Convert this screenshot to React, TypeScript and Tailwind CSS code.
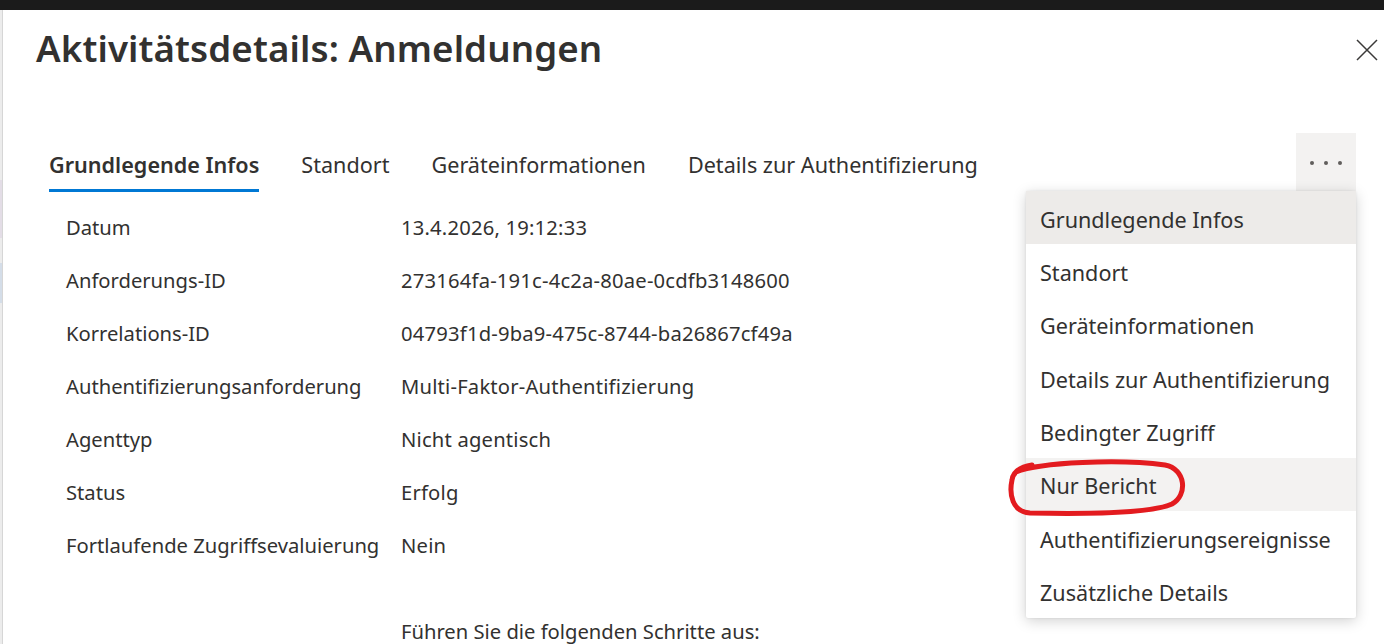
const rows = [
	{ label: 'Datum', value: '13.4.2026, 19:12:33' },
	{ label: 'Anforderungs-ID', value: '273164fa-191c-4c2a-80ae-0cdfb3148600' },
	{ label: 'Korrelations-ID', value: '04793f1d-9ba9-475c-8744-ba26867cf49a' },
	{ label: 'Authentifizierungsanforderung', value: 'Multi-Faktor-Authentifizierung' },
	{ label: 'Agenttyp', value: 'Nicht agentisch' },
	{ label: 'Status', value: 'Erfolg' },
	{ label: 'Fortlaufende Zugriffsevaluierung', value: 'Nein' },
];

const tabs = ['Grundlegende Infos', 'Standort', 'Geräteinformationen', 'Details zur Authentifizierung'];

const menuItems = [
	'Grundlegende Infos',
	'Standort',
	'Geräteinformationen',
	'Details zur Authentifizierung',
	'Bedingter Zugriff',
	'Nur Bericht',
	'Authentifizierungsereignisse',
	'Zusätzliche Details',
];

export default function App() {
	return (
		<div
			className="w-[1384px] h-[644px] overflow-hidden flex flex-col bg-white text-[#323130]"
			style={{ fontFamily: '"Noto Sans", "Open Sans", sans-serif' }}
		>
			{/* top bar of the portal behind */}
			<div className="h-[10px] bg-[#1b1b1b] shrink-0" />

			<div className="flex flex-1 min-h-0">
				{/* sliver of the page behind the panel */}
				<div className="w-[3px] shrink-0 flex flex-col bg-[#ececec] border-r border-[#d6d6d6]">
					<div className="h-[170px]" />
					<div className="h-[58px] bg-[#e3dde6]" />
					<div className="h-[25px]" />
					<div className="h-[40px] bg-[#d4dde8]" />
					<div className="flex-1" />
				</div>

				<div className="flex-1 relative">
					{/* header */}
					<div className="flex items-start justify-between pl-[33px] pr-[6px] pt-[16px]">
						<h1 className="text-[36.7px] font-semibold leading-[44px] tracking-[0.1px]">
							Aktivitätsdetails: Anmeldungen
						</h1>
						<button className="mt-[13px] w-[22px] h-[22px] text-[#3b3a39]">
							<svg width="22" height="22" viewBox="0 0 22 22">
								<path d="M1 1 L21 21 M21 1 L1 21" stroke="currentColor" strokeWidth="1.5" fill="none" />
							</svg>
						</button>
					</div>

					{/* tabs */}
					<div className="flex items-stretch mt-[63px] h-[58px] pl-[46px] pr-[28px]">
						<div className="flex items-stretch gap-[42px] text-[21.6px]">
							{tabs.map((t, i) => (
								<div key={t} className="relative flex items-center pt-[6px]">
									<span className={i === 0 ? 'font-semibold' : ''}>{t}</span>
									{i === 0 && (
										<div className="absolute left-0 right-0 bottom-[-1px] h-[3px] bg-[#0078d4]" />
									)}
								</div>
							))}
						</div>
						<div className="flex-1" />
						<button className="w-[60px] bg-[#f3f2f1] flex items-center justify-center gap-[10px] pt-[2px]">
							<span className="w-[4px] h-[4px] rounded-full bg-[#605e5c]" />
							<span className="w-[4px] h-[4px] rounded-full bg-[#605e5c]" />
							<span className="w-[4px] h-[4px] rounded-full bg-[#605e5c]" />
						</button>
					</div>

					{/* details */}
					<div className="pl-[63px] pt-[10px] text-[20.2px]">
						{rows.map((r) => (
							<div key={r.label} className="flex items-center h-[53px]">
								<div className="w-[335px]">{r.label}</div>
								<div className="tracking-[0.2px]">{r.value}</div>
							</div>
						))}
						<div className="flex items-center h-[53px] mt-[33px]">
							<div className="w-[335px]" />
							<div>Führen Sie die folgenden Schritte aus:</div>
						</div>
					</div>

					{/* overflow menu */}
					<div className="absolute left-[1023px] top-[181px] w-[330px] bg-white rounded-[2px] shadow-[0_3px_14px_rgba(0,0,0,0.18),0_0_3px_rgba(0,0,0,0.08)] text-[21.6px]">
						{menuItems.map((m, i) => (
							<div
								key={m}
								className={
									'h-[53.4px] flex items-center px-[14px] pt-[4px] ' +
									(i === 0 ? 'bg-[#edebe9]' : i === 5 ? 'bg-[#f3f2f1]' : '')
								}
							>
								{m}
							</div>
						))}
					</div>

					{/* red annotation, drawn in page coordinates */}
					<svg
						className="absolute left-0 top-0 pointer-events-none"
						width="1381"
						height="634"
						viewBox="3 10 1381 634"
					>
						<path
							d="M1016 472 C1040 462 1120 459 1165 465 C1186 469 1188 495 1172 504 C1150 514 1080 514 1030 513 C1012 512 1009 494 1012 480 C1013 472 1020 467 1032 465"
							fill="none"
							stroke="#e31b1f"
							strokeWidth="5"
							strokeLinecap="round"
						/>
					</svg>
				</div>
			</div>
		</div>
	);
}
